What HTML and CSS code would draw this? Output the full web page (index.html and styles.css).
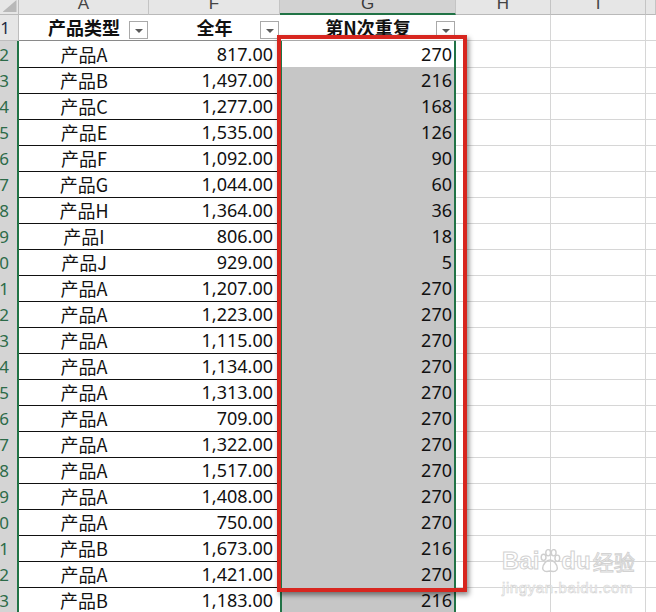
FILE: index.html
```html
<!DOCTYPE html>
<html lang="zh">
<head>
<meta charset="utf-8">
<link rel="stylesheet" href="styles.css">
</head>
<body>
<div class="sheet">
  <div class="row colhead">
    <div class="corner"><span class="tri"></span></div>
    <div>A</div><div>F</div><div class="sel">G</div><div>H</div><div>I</div><div></div>
  </div>
  <div class="row r1">
    <div class="rh top">1</div>
    <div class="hd"><span class="lbl">产品类型</span><span class="flt"></span></div>
    <div class="hd"><span class="lbl">全年</span><span class="flt"></span></div>
    <div class="hd gh"><span class="lbl">第N次重复</span><span class="flt"></span></div>
    <div class="e"></div><div class="e"></div><div class="e last"></div>
  </div>
  <div id="rows"></div>
  <div class="redbox"></div>
  <div class="wm">
    <div class="wm1"><span>Bai</span><svg class="paw" width="22" height="24" viewBox="0 0 24 26"><g fill="none" stroke="#cfcfcf" stroke-width="1.6"><ellipse cx="5" cy="9" rx="2.6" ry="3.4"/><ellipse cx="10" cy="4" rx="2.6" ry="3.4"/><ellipse cx="16" cy="4" rx="2.6" ry="3.4"/><ellipse cx="20" cy="10" rx="2.6" ry="3.4"/><path d="M12 12c-4 0-8 5-8 9 0 3 3 4 8 3 5 1 8 0 8-3 0-4-4-9-8-9z"/></g></svg><span>du</span><span class="cn">经验</span></div>
    <div class="wm2">jingyan.baidu.com</div>
  </div>
</div>
<script src="app.js"></script>
</body>
</html>
```
FILE: app.js
```js
const data = [
  ["产品A","817.00","270"],["产品B","1,497.00","216"],["产品C","1,277.00","168"],
  ["产品E","1,535.00","126"],["产品F","1,092.00","90"],["产品G","1,044.00","60"],
  ["产品H","1,364.00","36"],["产品I","806.00","18"],["产品J","929.00","5"],
  ["产品A","1,207.00","270"],["产品A","1,223.00","270"],["产品A","1,115.00","270"],
  ["产品A","1,134.00","270"],["产品A","1,313.00","270"],["产品A","709.00","270"],
  ["产品A","1,322.00","270"],["产品A","1,517.00","270"],["产品A","1,408.00","270"],
  ["产品A","750.00","270"],["产品B","1,673.00","216"],["产品A","1,421.00","270"],
  ["产品B","1,183.00","216"]
];
const host = document.getElementById("rows");
data.forEach((d, i) => {
  const r = document.createElement("div");
  r.className = "row dr";
  r.innerHTML =
    '<div class="rh"><span>' + (i + 2) + '</span></div>' +
    '<div class="a">' + d[0] + '</div>' +
    '<div class="f">' + d[1] + '</div>' +
    '<div class="g' + (i === 0 ? ' act' : '') + '">' + d[2] + '</div>' +
    '<div class="e"></div><div class="e"></div><div class="e last"></div>';
  host.appendChild(r);
});
```
FILE: styles.css
```css
* { box-sizing: border-box; }
body {
  margin: 0;
  overflow: hidden;
  background: #fff;
  font-family: "Noto Sans", "Noto Sans CJK SC", sans-serif;
  color: #111;
}
.sheet {
  position: relative;
  width: 656px;
  height: 612px;
  overflow: hidden;
}
.row {
  display: grid;
  grid-template-columns: 19px 130px 131px 176px 95px 95px 10px;
}
.colhead { height: 15px; }
.colhead > div {
  background: #e6e6e6;
  border-right: 1px solid #c4c4c4;
  border-bottom: 1px solid #b9b9b9;
  display: flex;
  justify-content: center;
  align-items: flex-start;
  font: 17px/8px "Liberation Sans", sans-serif;
  color: #444;
  overflow: hidden;
}
.colhead .sel {
  background: #d2d2d2;
  border-bottom: 2px solid #217346;
  color: #3a3a3a;
}
.colhead .corner {
  border-right: 1px solid #bdbdbd;
}
.tri {
  display: block;
  width: 14px;
  height: 12px;
  margin-left: 1px;
  background: #b8b8b8;
  clip-path: polygon(100% 0, 100% 100%, 0 100%);
}
.r1, .dr { height: 26px; }
.rh {
  display: flex;
  justify-content: flex-end;
  align-items: center;
  padding-right: 8px;
  white-space: nowrap;
  font: 17px "Noto Sans", sans-serif;
  background: #d4d4d4;
  color: #2c6b48;
  border-right: 2px solid #217346;
  border-bottom: 1px solid #bdbdbd;
}
.rh.top {
  background: #e6e6e6;
  color: #1e2a44;
  border-right: 1px solid #bdbdbd;
}
.hd {
  display: grid;
  border-bottom: 1px solid #8a8a8a;
  font: bold 18px "Noto Sans CJK SC", sans-serif;
}
.hd > * { grid-area: 1 / 1; }
.hd .lbl {
  justify-self: center;
  align-self: center;
  line-height: 25px;
}
.flt {
  justify-self: end;
  align-self: end;
  width: 19px;
  height: 18px;
  margin: 0 1px 1px 0;
  border: 1px solid #a9a9a9;
  background: #fff;
  display: flex;
  align-items: center;
  justify-content: center;
  padding-top: 2px;
}
.flt::after {
  content: "";
  border-left: 4px solid transparent;
  border-right: 4px solid transparent;
  border-top: 4px solid #5a5a5a;
}
.hd.gh { border-bottom: 1px solid #a9a9a9; }
.a, .f, .g {
  display: flex;
  align-items: center;
  font: 18px "Noto Sans", "Noto Sans CJK SC", sans-serif;
  white-space: nowrap;
}
.a {
  justify-content: center;
  font-family: "Noto Sans CJK SC", sans-serif;
  border-bottom: 1px solid #111;
}
.f {
  justify-content: flex-end;
  padding-right: 7px;
  border-bottom: 1px solid #111;
}
.g {
  justify-content: flex-end;
  padding-right: 2px;
  background: #c6c6c6;
  border-left: 2px solid #217346;
  border-right: 2px solid #217346;
  border-bottom: 1px solid #a9a9a9;
}
.g.act { background: #fff; }
.e {
  border-right: 1px solid #d6d6d6;
  border-bottom: 1px solid #d6d6d6;
}
.e.last { border-right: none; }
.redbox {
  position: absolute;
  left: 277px;
  top: 35px;
  width: 190px;
  height: 557px;
  border: 4px solid #d7261f;
  box-shadow: 2px 3px 5px rgba(0, 0, 0, 0.45);
}
.wm {
  position: absolute;
  left: 502px;
  top: 547px;
  color: rgba(255, 255, 255, 0.9);
  -webkit-text-stroke: 1px #d2d2d2;
}
.wm1 {
  display: flex;
  align-items: center;
  font: bold 24px/28px "Liberation Sans", sans-serif;
}
.wm1 .cn {
  font: 21px/28px "Noto Sans CJK SC", sans-serif;
  margin-left: 2px;
}
.wm2 {
  margin-top: 6px;
  font: 15px/14px "Liberation Sans", sans-serif;
  letter-spacing: 0.6px;
  -webkit-text-stroke: 0.6px #d2d2d2;
}
```
